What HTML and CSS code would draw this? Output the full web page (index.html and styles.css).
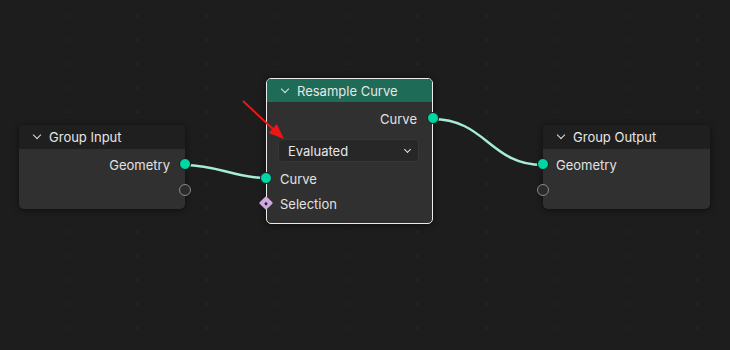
FILE: index.html
```html
<!DOCTYPE html>
<html lang="en">
  <head>
    <meta charset="UTF-8" />
    <title>Resample Curve nodes</title>
    <link rel="stylesheet" href="styles.css">
  </head>
  <body>
    <div id="editor">
      <svg class="links" width="730" height="350" viewBox="0 0 730 350">
        <path d="M185 165 C218 165 234 178 266 178" />
        <path d="M432 119 C486 119 490 165 543 165" />
      </svg>

      <div class="node" id="groupInput">
        <div class="header"><span class="chev"></span>Group Input</div>
        <div class="body">
          <div class="row out">Geometry<span class="socket geo"></span></div>
          <div class="row out"><span class="socket empty"></span></div>
        </div>
      </div>

      <div class="node selected" id="resample">
        <div class="header green"><span class="chev"></span>Resample Curve</div>
        <div class="body">
          <div class="row out">Curve<span class="socket geo"></span></div>
          <div class="dropdown">Evaluated<span class="chev small"></span></div>
          <div class="row in"><span class="socket geo"></span>Curve</div>
          <div class="row in"><span class="socket field"></span>Selection</div>
        </div>
      </div>

      <div class="node" id="groupOutput">
        <div class="header"><span class="chev"></span>Group Output</div>
        <div class="body">
          <div class="row in"><span class="socket geo"></span>Geometry</div>
          <div class="row in"><span class="socket empty"></span></div>
        </div>
      </div>

      <svg class="arrow" width="730" height="350" viewBox="0 0 730 350">
        <line x1="243" y1="101" x2="274" y2="130" />
        <polygon points="284,139 268.6,132.9 276.8,124.1" />
      </svg>
    </div>
  </body>
</html>
```

FILE: styles.css
```css
body {
  margin: 0;
  background-color: #1d1d1d;
  font-family: Inter, "Noto Sans", sans-serif;
  font-size: 13px;
  color: #e2e2e2;
}
#editor {
  position: relative;
  width: 730px;
  height: 350px;
  overflow: hidden;
  background-image: radial-gradient(circle, #262626 1px, transparent 1.5px);
  background-size: 70px 24px;
  background-position: 32px 4px;
}
.links, .arrow {
  position: absolute;
  left: 0;
  top: 0;
}
.links path {
  fill: none;
  stroke: #a6ecd9;
  stroke-width: 2.5;
}
.arrow line {
  stroke: #f01414;
  stroke-width: 2;
}
.arrow polygon {
  fill: #f01414;
}
.node {
  position: absolute;
  box-sizing: border-box;
  background-color: #303030;
  border-radius: 5px;
  box-shadow: 0 1px 6px rgba(0, 0, 0, 0.55);
}
#groupInput {
  left: 19px;
  top: 125px;
  width: 166px;
}
#resample {
  left: 266px;
  top: 78px;
  width: 167px;
}
#groupOutput {
  left: 543px;
  top: 125px;
  width: 167px;
}
.selected {
  border: 1px solid #ececec;
}
.header {
  display: flex;
  align-items: center;
  height: 24px;
  padding-left: 30px;
  position: relative;
  background-color: #1f1f1f;
  border-radius: 5px 5px 0 0;
  color: #e6e6e6;
}
.header.green {
  height: 23px;
  background-color: #1e6b57;
  border-radius: 4px 4px 0 0;
}
.header .chev {
  position: absolute;
  left: 15px;
  top: 7px;
}
.chev {
  width: 6px;
  height: 6px;
  box-sizing: border-box;
  border-right: 1.4px solid #e0e0e0;
  border-bottom: 1.4px solid #e0e0e0;
  transform: rotate(45deg);
}
.body {
  padding: 3px 0 6px;
}
#groupInput .row + .row,
#groupOutput .row + .row {
  height: 26px;
}
#resample .body {
  padding-top: 4px;
  padding-bottom: 7px;
}
.row {
  display: flex;
  align-items: center;
  height: 25px;
  position: relative;
}
.row.out {
  justify-content: flex-end;
  padding-right: 15px;
}
.row.in {
  padding-left: 13px;
}
.socket {
  position: absolute;
  top: 6px;
  width: 12px;
  height: 12px;
  box-sizing: border-box;
  border-radius: 50%;
}
.row.out .socket {
  right: -6px;
}
.row.in .socket {
  left: -6px;
}
#resample .row.out .socket {
  right: -7px;
}
#resample .row.in .socket {
  left: -7px;
}
.socket.geo {
  background-color: #00d6a3;
  border: 0.5px solid #1a1a1a;
}
.socket.empty {
  border: 1.5px solid #8a8a8a;
  background-color: #2b2b2b;
  top: 7px;
}
.socket.field {
  width: 10px;
  height: 10px;
  top: 7px;
  border-radius: 1px;
  background-color: #d0aadf;
  transform: rotate(45deg);
}
#resample .row.in .socket.field {
  left: -6px;
}
.socket.field::after {
  content: "";
  position: absolute;
  left: 3.5px;
  top: 3.5px;
  width: 3px;
  height: 3px;
  border-radius: 50%;
  background-color: #2a2430;
}
.dropdown {
  display: flex;
  align-items: center;
  justify-content: space-between;
  height: 23px;
  box-sizing: border-box;
  margin: 8px 13px 4px 11px;
  padding: 0 8px 0 9px;
  background-color: #272727;
  border: 1px solid #363636;
  border-radius: 4px;
  color: #e6e6e6;
}
.chev.small {
  width: 5px;
  height: 5px;
  margin-top: -3px;
}
```
